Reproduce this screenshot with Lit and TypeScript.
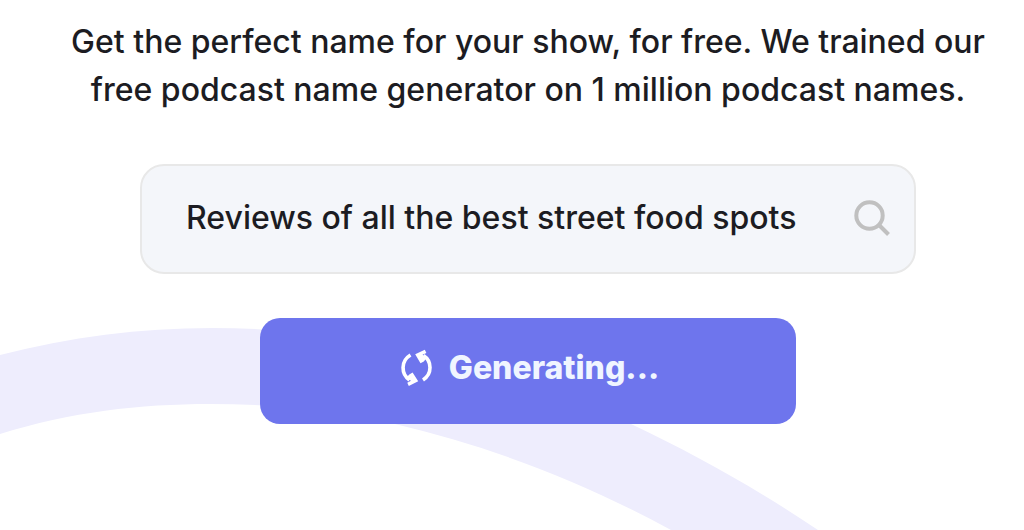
import { LitElement, html, css } from "lit";
import { customElement } from "lit/decorators.js";

@customElement("app-root")
export class AppRoot extends LitElement {
  static styles = css`
    :host {
      display: block;
      position: relative;
      min-height: 100vh;
      overflow: hidden;
      box-sizing: border-box;
      background: #fff;
      color: #1c1c22;
      font-family: Inter, sans-serif;
    }
    .swoosh {
      position: absolute;
      inset: 0;
      width: 100%;
      height: 100%;
    }
    .hero {
      position: relative;
      display: flex;
      flex-direction: column;
      align-items: center;
      padding: 18px 16px 0 48px;
    }
    .intro {
      margin: 0;
      max-width: 960px;
      text-align: center;
      text-wrap: balance;
      font-size: 32px;
      line-height: 48px;
      font-weight: 500;
    }
    form {
      display: flex;
      flex-direction: column;
      align-items: center;
      gap: 44px;
      width: 100%;
      max-width: 776px;
      margin-top: 50px;
    }
    .field {
      display: flex;
      align-items: center;
      gap: 16px;
      width: 100%;
      box-sizing: border-box;
      height: 110px;
      padding: 0 24px 2px 44px;
      border: 2px solid #e8e8e8;
      border-radius: 24px;
      background: #f4f6fa;
    }
    input {
      flex: 1;
      min-width: 0;
      padding: 0;
      border: 0;
      outline: 0;
      background: none;
      color: inherit;
      font: 500 32px/48px Inter, sans-serif;
    }
    .search {
      width: 36px;
      height: 36px;
      flex: none;
    }
    button {
      display: flex;
      align-items: center;
      justify-content: center;
      gap: 16px;
      width: 100%;
      max-width: 536px;
      height: 106px;
      padding: 0 0 6px 4px;
      border: 0;
      border-radius: 20px;
      background: #6e75ed;
      color: #f0f5ff;
      font: 800 32px/48px Inter, sans-serif;
    }
    .spin {
      width: 32px;
      height: 40px;
    }
  `;

  render() {
    return html`
      <svg class="swoosh" viewBox="0 0 1024 530" preserveAspectRatio="xMinYMin slice" aria-hidden="true">
        <path
          d="M0 355C70 337 140 328 212 328C360 328 500 364 631 424C697 455 760 491 818 530H671C585 483 490 446 395 424C335 409 270 404 210 404C140 404 70 412 0 434Z"
          fill="#eeedfd"
        />
      </svg>
      <main class="hero">
        <p class="intro">
          Get the perfect name for your show, for free. We trained our free podcast name generator on 1 million podcast
          names.
        </p>
        <form @submit=${(e: Event) => e.preventDefault()}>
          <div class="field">
            <input type="text" aria-label="Podcast description" .value=${"Reviews of all the best street food spots"} />
            <svg class="search" viewBox="0 0 36 36" fill="none" stroke="#c0c0c0" stroke-width="4" aria-hidden="true">
              <circle cx="15.5" cy="15.5" r="13.2" />
              <path d="M25 25l9.5 9.5" />
            </svg>
          </div>
          <button type="submit">
            <svg class="spin" viewBox="0 0 32 40" aria-hidden="true">
              <g fill="none" stroke="#fff" stroke-width="3.6">
                <path d="M9.500 7C-0.500 13 0 26 8.500 32" />
                <path d="M22 32C31.500 26 31 13 22.500 7.500" />
              </g>
              <g fill="#fff">
                <path d="M8.300 26.500L11.600 24.500L17.200 33.300L7.800 38L6.300 34.800L10 32.800L5 30Z" />
                <path d="M22.800 13.500L19.500 15.200L14.200 6.200L23.800 1.800L25.400 5L21.500 6.800L26 9.500Z" />
              </g>
            </svg>
            <span>Generating...</span>
          </button>
        </form>
      </main>
    `;
  }
}
